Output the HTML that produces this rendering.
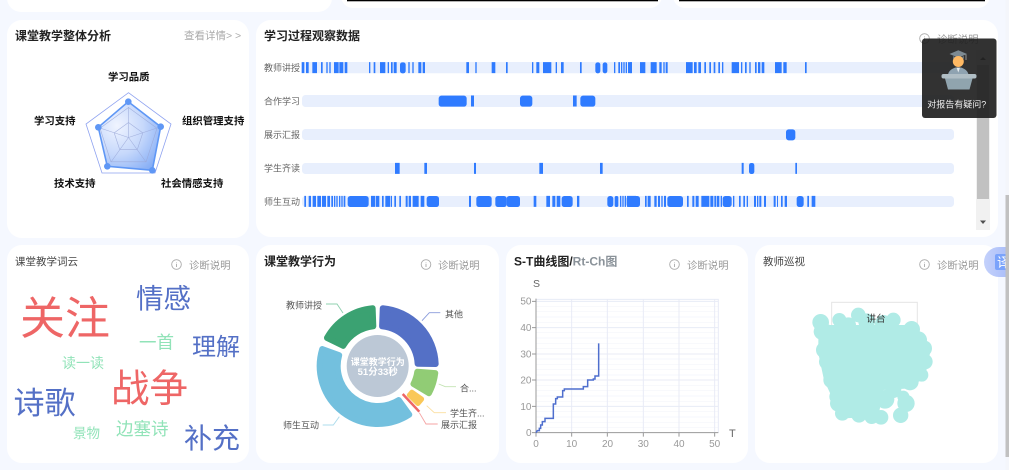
<!DOCTYPE html>
<html lang="zh">
<head>
<meta charset="utf-8">
<title>课堂教学分析</title>
<style>
html,body{margin:0;padding:0;width:1009px;height:470px;overflow:hidden;background:#f5f8ff}
svg{display:block;filter:blur(.3px)}
text{font-family:"Liberation Sans","Noto Sans CJK SC",sans-serif}
.t{font-size:12px;font-weight:700;fill:#222}
.n{font-size:10.5px;fill:#444}
.d{font-size:10.4px;fill:#999}
.r{font-size:10.4px;font-weight:700;fill:#111}
.l{font-size:9px;fill:#666}
.p{font-size:9px;fill:#555}
.k{font-size:10px;fill:#999}
.b path{fill:none;stroke:#2f7bff;stroke-width:33}
.b rect{fill:#2f7bff}
</style>
</head>
<body>
<svg width="1009" height="470" viewBox="0 0 1009 470" xmlns="http://www.w3.org/2000/svg">
<defs>
<radialGradient id="rg" cx=".3" cy=".35" r=".85"><stop offset="0" stop-color="#f0f4ff"/><stop offset=".5" stop-color="#c6d8fb"/><stop offset="1" stop-color="#7fa9f5"/></radialGradient>
<linearGradient id="tr" x1="0" y1="0" x2="1" y2="0"><stop offset="0" stop-color="#c4d1fb"/><stop offset="1" stop-color="#a9bdf9"/></linearGradient>
</defs>
<rect width="1009" height="470" fill="#f5f8ff"/>

<!-- top partial cards -->
<rect x="7" y="-30" width="325" height="42" rx="14" fill="#fff"/>
<rect x="341" y="-30" width="321" height="38" rx="12" fill="#fff"/>
<rect x="673" y="-30" width="317" height="38" rx="12" fill="#fff"/>
<rect x="347" y="0" width="311" height="1.3" fill="#000"/>
<rect x="679" y="0" width="306" height="1.3" fill="#000"/>

<!-- cards -->
<rect x="7" y="20" width="242" height="218" rx="15" fill="#fff"/>
<rect x="256" y="20" width="742" height="217" rx="15" fill="#fff"/>
<rect x="7" y="245" width="242" height="218" rx="15" fill="#fff"/>
<rect x="256" y="245" width="243" height="218" rx="15" fill="#fff"/>
<rect x="506" y="245" width="242" height="218" rx="15" fill="#fff"/>
<rect x="755" y="245" width="243" height="218" rx="15" fill="#fff"/>

<!-- radar card -->
<text class="t" x="15" y="40">课堂教学整体分析</text>
<text x="184" y="39" font-size="10.5" fill="#aaa">查看详情&gt; &gt;</text>
<g fill="none" stroke-width=".8">
<polygon points="128.5,92.7 171,124 155,173 102,173 86,124" stroke="#8ea2f0"/>
</g>
<polygon points="128.3,101.7 160.7,126.7 152.3,170.3 107.3,166.3 98.3,127.3" fill="url(#rg)" stroke="#5f97f5" stroke-width="1.6"/>
<g fill="none" stroke="#9aa8d8" stroke-width=".6" opacity=".85">
<polygon points="128.5,107.5 157,128.2 146.1,161.8 110.9,161.8 100,128.2"/>
<polygon points="128.5,122.5 142.8,132.9 137.3,149.6 119.7,149.6 114.2,132.9"/>
<path d="M128.5 137.5V107M128.5 137.5L157 128M128.5 137.5L146 162M128.5 137.5L111 162M128.5 137.5L100 128"/>
</g>
<g fill="#5f97f5"><circle cx="128.3" cy="101.7" r="3.3"/><circle cx="160.7" cy="126.7" r="3.3"/><circle cx="152.3" cy="170.3" r="3.3"/><circle cx="107.3" cy="166.3" r="3.3"/><circle cx="98.3" cy="127.3" r="3.3"/></g>
<text class="r" x="108" y="80.5">学习品质</text>
<text class="r" x="34" y="124.5">学习支持</text>
<text class="r" x="182" y="124.5">组织管理支持</text>
<text class="r" x="54" y="187">技术支持</text>
<text class="r" x="161" y="187">社会情感支持</text>

<!-- learning process card -->
<text class="t" x="264" y="40">学习过程观察数据</text>
<circle cx="924.5" cy="38.5" r="4.8" fill="none" stroke="#aaa" stroke-width=".9"/>
<path d="M924.5 36.5v.8M924.5 38v3" stroke="#aaa" stroke-width=".9"/>
<text class="d" x="937" y="43">诊断说明</text>
<text class="l" x="264" y="71">教师讲授</text>
<text class="l" x="264" y="104.500">合作学习</text>
<text class="l" x="264" y="138">展示汇报</text>
<text class="l" x="264" y="171.500">学生齐读</text>
<text class="l" x="264" y="205">师生互动</text>
<g fill="#e8effd">
<rect x="302" y="62" width="652" height="11.300" rx="3.500"/>
<rect x="302" y="95" width="652" height="12" rx="3.500"/>
<rect x="302" y="129" width="652" height="11" rx="3.500"/>
<rect x="302" y="163" width="652" height="11" rx="3.500"/>
<rect x="302" y="196" width="652" height="11" rx="3.500"/>
</g>
<g class="b" transform="translate(256 0) scale(.33333)">
<path d="M137 203H145M150 203H158M169 203H183M195 203H200M211 203H215M220 203H224M234 203H248M250 203H262M266 203H274M339 203H343M353 203H358M372 203H388M395 203H399M405 203H410M413 203H422M457 203H461M469 203H473M487 203H496M500 203H507M631 203H639M658 203H662M707 203H718M750 203H755M828 203H832M841 203H850M861 203H886M899 203H903M915 203H923M972 203H977M1074 203H1078M1087 203H1092M1095 203H1099M1102 203H1106M1109 203H1113M1116 203H1127"/>
<rect x="432" y="187" width="17" height="33" rx="7"/><rect x="1018" y="187" width="15" height="33" rx="7"/><rect x="1040" y="187" width="14" height="33" rx="7"/>
<path d="M645 303H654M951 303H962"/>
<rect x="548" y="287" width="84" height="33" rx="8"/><rect x="792" y="287" width="37" height="33" rx="8"/><rect x="973" y="287" width="45" height="33" rx="8"/>
<path d="M417 505H431M505 505H513M654 505H660M850 505H861M1032 505H1040"/>
<path d="M145 604H150M158 604H165M170 604H180M184 604H195M198 604H210M214 604H222M226 604H231M234 604H238M241 604H245M249 604H253M256 604H260M263 604H268M345 604H357M359 604H370M378 604H383M388 604H402M404 604H408M415 604H420M430 604H435M449 604H455M458 604H465M470 604H488M494 604H505M639 604H645M833 604H841M871 604H882M889 604H898M902 604H913M963 604H970M1092 604H1096M1099 604H1103M1106 604H1110M1113 604H1140"/>
<rect x="275" y="588" width="63" height="33" rx="8"/><rect x="512" y="588" width="37" height="33" rx="8"/><rect x="661" y="588" width="46" height="33" rx="8"/><rect x="718" y="588" width="34" height="33" rx="8"/><rect x="752" y="588" width="40" height="33" rx="8"/><rect x="917" y="588" width="33" height="33" rx="8"/><rect x="1054" y="588" width="18" height="33" rx="8"/><rect x="1076" y="588" width="11" height="33" rx="5"/>
</g>
<g class="b" transform="translate(630 0) scale(.33333)">
<path d="M0 203H6M30 203H46M62 203H80M88 203H95M100 203H104M107 203H113M168 203H188M192 203H200M205 203H213M223 203H228M238 203H243M251 203H256M265 203H270M276 203H280M305 203H327M333 203H337M345 203H350M358 203H362M375 203H380M384 203H391M395 203H403M435 203H455M460 203H470M525 203H530"/>
<rect x="468" y="388" width="28" height="33" rx="8"/>
<path d="M335 505H341M496 505H501"/>
<rect x="357" y="489" width="16" height="33" rx="7"/>
<path d="M45 604H50M53 604H62M73 604H80M84 604H90M94 604H98M102 604H108M171 604H176M187 604H193M197 604H206M214 604H238M241 604H250M253 604H258M260 604H268M272 604H276M309 604H313M327 604H332M340 604H345M350 604H354M372 604H378M381 604H385M388 604H394M402 604H408M431 604H437M441 604H444M453 604H458M464 604H471M532 604H537M545 604H556"/>
<rect x="-10" y="588" width="40" height="33" rx="8"/><rect x="112" y="588" width="47" height="33" rx="8"/><rect x="278" y="588" width="27" height="33" rx="8"/><rect x="500" y="588" width="21" height="33" rx="8"/>
</g>
<!-- inner scrollbar -->
<rect x="976" y="50" width="14" height="180" fill="#f1f1f1"/>
<rect x="977" y="65" width="12" height="134" fill="#c1c1c1"/>
<path d="M980 60l3-3 3 3z" fill="#555"/>
<path d="M980 220.500l3 3.500 3-3.500z" fill="#505050"/>

<!-- word cloud -->
<text class="n" x="15" y="265" font-size="10.4">课堂教学词云</text>
<circle cx="176.500" cy="264.500" r="4.800" fill="none" stroke="#aaa" stroke-width=".9"/>
<path d="M176.500 262.500v.8M176.500 264v3" stroke="#aaa" stroke-width=".9"/>
<text class="d" x="189" y="269">诊断说明</text>
<text x="20" y="334" font-size="45" fill="#ee6666">关注</text>
<text x="136" y="308" font-size="27.500" fill="#5470c6">情感</text>
<text x="139" y="348.500" font-size="17.500" fill="#91e3b8">一首</text>
<text x="192" y="355" font-size="24" fill="#5470c6">理解</text>
<text x="62" y="368" font-size="14" fill="#91e3b8">读一读</text>
<text x="111" y="402" font-size="38.500" fill="#ee6666">战争</text>
<text x="13.500" y="414" font-size="31" fill="#5470c6">诗歌</text>
<text x="73" y="438" font-size="13.500" fill="#91e3b8">景物</text>
<text x="116" y="435" font-size="17.500" fill="#91e3b8">边塞诗</text>
<text x="184" y="448" font-size="28" fill="#5470c6">补充</text>

<!-- donut card -->
<text class="t" x="264" y="265.500">课堂教学行为</text>
<circle cx="426" cy="264.500" r="4.800" fill="none" stroke="#aaa" stroke-width=".9"/>
<path d="M426 262.500v.8M426 264v3" stroke="#aaa" stroke-width=".9"/>
<text class="d" x="438" y="269">诊断说明</text>
<circle cx="377.700" cy="366" r="31" fill="#bcc8d6"/>
<g stroke-linejoin="round" stroke-width="6">
<path fill="#5470c6" stroke="#5470c6" d="M382.76 308.22A58 58 0 0 1 435.67 363.98L417.63 363.7A40 40 0 0 0 382.09 326.24Z"/>
<path fill="#91cc75" stroke="#91cc75" d="M435.27 373.07A58 58 0 0 1 428.91 393.23L413.44 383.97A40 40 0 0 0 417.28 371.78Z"/>
<path fill="#fac858" stroke="#fac858" stroke-width="5" d="M421.62 399.1L417.93 403.51L409.4 395.05L411.82 392.18Z"/>
<path fill="#73c0de" stroke="#73c0de" d="M409.29 414.64A58 58 0 0 1 322.24 349.04L339.19 355.18A40 40 0 0 0 398.72 400.04Z"/>
<path fill="#3ba272" stroke="#3ba272" d="M326.97 337.88A58 58 0 0 1 372.64 308.22L373.31 326.24A40 40 0 0 0 343.16 345.82Z"/>
</g>
<path d="M402.7 394L419.3 411.700" stroke="#ee6666" stroke-width="2.500" fill="none"/>
<text x="377.700" y="365" font-size="9" font-weight="700" fill="#fff" text-anchor="middle">课堂教学行为</text>
<text x="377.700" y="375" font-size="9.500" font-weight="700" fill="#fff" text-anchor="middle">51分33秒</text>
<g fill="none" stroke-width=".9">
<path d="M326 304H337L343 313" stroke="#8fd0af"/>
<path d="M440.300 312.700H429.300L422 320.700" stroke="#8a9cdc"/>
<path d="M456 386.700H445.300L438.700 384" stroke="#c3e3b2"/>
<path d="M446 412.700H434.300L426.700 405.700" stroke="#fcdf9f"/>
<path d="M437.700 424H426L419.300 412.700" stroke="#f5a3a3"/>
<path d="M322.700 425H333.300L339.300 416.700" stroke="#addcec"/>
</g>
<text class="p" x="286" y="308.500">教师讲授</text>
<text class="p" x="445" y="317.500">其他</text>
<text class="p" x="460" y="391.500">合...</text>
<text class="p" x="450" y="416.500">学生齐...</text>
<text class="p" x="441" y="428">展示汇报</text>
<text class="p" x="283" y="428.500">师生互动</text>

<!-- S-T card -->
<text x="514" y="265.500" font-size="12" font-weight="700" fill="#222">S-T曲线图/<tspan fill="#8a9299">Rt-Ch图</tspan></text>
<circle cx="674.500" cy="264.500" r="4.800" fill="none" stroke="#aaa" stroke-width=".9"/>
<path d="M674.500 262.500v.8M674.500 264v3" stroke="#aaa" stroke-width=".9"/>
<text class="d" x="687" y="269">诊断说明</text>
<text x="533" y="287" font-size="10.500" fill="#666">S</text>
<text x="729" y="437" font-size="11" fill="#666">T</text>
<g transform="translate(500 240) scale(.33333)" fill="none">
<path stroke="#f3f5fb" stroke-width="2" d="M108 563H655M108 547H655M108 531H655M108 515H655M108 484H655M108 468H655M108 452H655M108 436H655M108 405H655M108 389H655M108 373H655M108 357H655M108 326H655M108 310H655M108 294H655M108 278H655M108 247H655M108 231H655M108 215H655M108 199H655"/>
<path stroke="#e8ebf6" stroke-width="3" d="M108 178H655V578M215 178V578M322 178V578M430 178V578M537 178V578M644 178V578M108 499H655M108 420H655M108 342H655M108 263H655M108 184H655"/>
<path stroke="#999" stroke-width="3" d="M108 176V578H655M96 578H108M96 499H108M96 420H108M96 342H108M96 263H108M96 184H108M108 578V590M215 578V590M322 578V590M430 578V590M537 578V590M644 578V590"/>
<path stroke="#4f6fce" stroke-width="4.500" d="M108 578L112 572H118V565H122V555H127V545H135V535H160V492H167V476H172V471H188V452H193V447H250V440H263V420H280V417H285V408H296V310"/>
</g>
<text class="k" x="531.500" y="304.500" text-anchor="end">50</text>
<text class="k" x="531.500" y="331" text-anchor="end">40</text>
<text class="k" x="531.500" y="357.500" text-anchor="end">30</text>
<text class="k" x="531.500" y="383.500" text-anchor="end">20</text>
<text class="k" x="531.500" y="410" text-anchor="end">10</text>
<text class="k" x="531.500" y="436" text-anchor="end">0</text>
<text class="k" x="536" y="447" text-anchor="middle">0</text>
<text class="k" x="571.700" y="447" text-anchor="middle">10</text>
<text class="k" x="607.500" y="447" text-anchor="middle">20</text>
<text class="k" x="643.300" y="447" text-anchor="middle">30</text>
<text class="k" x="679" y="447" text-anchor="middle">40</text>
<text class="k" x="714.700" y="447" text-anchor="middle">50</text>

<!-- teacher patrol card -->
<text class="n" x="763" y="265">教师巡视</text>
<circle cx="924.500" cy="264.500" r="4.800" fill="none" stroke="#aaa" stroke-width=".9"/>
<path d="M924.500 262.500v.8M924.500 264v3" stroke="#aaa" stroke-width=".9"/>
<text class="d" x="937" y="269">诊断说明</text>
<g transform="translate(750 240) scale(.33333)">
<rect x="245" y="187" width="257" height="79" fill="#fff" stroke="#e5e5e5" stroke-width="3"/>
<g fill="#b0ebe6">
<polygon points="205,245 240,255 500,255 540,340 525,410 480,445 400,450 385,530 280,535 245,470 222,420 205,340"/>
<circle cx="212" cy="247" r="25"/><circle cx="215" cy="275" r="24"/><circle cx="268" cy="240" r="21"/><circle cx="325" cy="225" r="22"/><circle cx="430" cy="240" r="22"/><circle cx="295" cy="255" r="23"/><circle cx="350" cy="245" r="25"/><circle cx="400" cy="250" r="25"/><circle cx="485" cy="268" r="25"/><circle cx="505" cy="300" r="26"/><circle cx="522" cy="325" r="24"/><circle cx="525" cy="365" r="23"/><circle cx="515" cy="405" r="20"/><circle cx="480" cy="425" r="26"/><circle cx="223" cy="330" r="25"/><circle cx="232" cy="365" r="25"/><circle cx="245" cy="420" r="25"/><circle cx="262" cy="470" r="24"/><circle cx="265" cy="490" r="25"/><circle cx="277" cy="520" r="22"/><circle cx="327" cy="525" r="23"/><circle cx="365" cy="530" r="22"/><circle cx="393" cy="532" r="22"/><circle cx="405" cy="478" r="28"/><circle cx="430" cy="450" r="24"/><circle cx="468" cy="490" r="26"/><circle cx="460" cy="470" r="18"/><circle cx="452" cy="526" r="23"/>
</g>
</g>
<text x="876" y="322" font-size="9.500" fill="#333" text-anchor="middle">讲台</text>

<!-- translate button -->
<path d="M1009 247H999A15 15 0 0 0 999 277H1009Z" fill="url(#tr)"/>
<rect x="995" y="254" width="16" height="16" rx="2" fill="#7aa3fb"/>
<text x="997" y="267" font-size="13" fill="#fff">译</text>

<!-- page scrollbar -->
<rect x="1005.500" y="0" width="3.500" height="470" fill="#f4f6fb"/>
<rect x="1005.500" y="195" width="3.500" height="262" fill="#c1c1c1"/>

<!-- floating helper -->
<rect x="922" y="38.500" width="74.500" height="79.500" rx="3" fill="#1e1e1e" fill-opacity=".91"/>
<path d="M958.300 50.200L949.500 54L958.300 57.800L967 54Z" fill="#7d8a92"/>
<path d="M953 56V59C955 58 962 58 964 59V56L958.300 58.500Z" fill="#6a767d"/>
<path d="M966 54.500V60" stroke="#aaa" stroke-width=".8"/>
<circle cx="958.300" cy="61.500" r="5.500" fill="#ffb963"/>
<path d="M948 75C948.500 70 953 68.500 955.500 67.500H961C963.500 68.500 968 70 968.500 75Z" fill="#8fa3b1"/>
<path d="M956.500 67.500H960L958.300 72.500Z" fill="#e8edf0"/>
<rect x="941.500" y="74" width="35" height="4.500" rx="2" fill="#b0bec5"/>
<path d="M945 78.500H972.500L969.500 89.500H948Z" fill="#90a4ae"/>
<text x="956.800" y="107.500" font-size="9" fill="#eee" text-anchor="middle">对报告有疑问?</text>
</svg>
</body>
</html>
